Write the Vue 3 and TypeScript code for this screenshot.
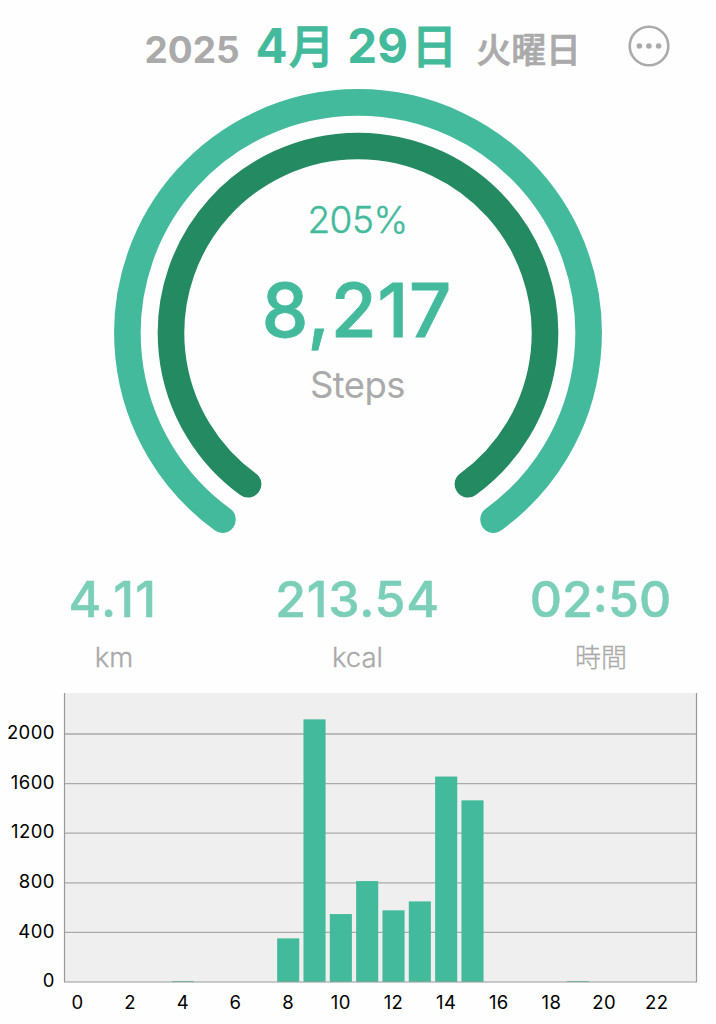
<script setup lang="ts">
interface Stat {
  value: string
  unit: string
  kind: string
}

const stats: Stat[] = [
  { value: '4.11', unit: 'km', kind: 'distance' },
  { value: '213.54', unit: 'kcal', kind: 'energy' },
  { value: '02:50', unit: '時間', kind: 'duration' },
]

const steps: Record<number, number> = {
  4: 7, 8: 352, 9: 2118, 10: 548, 11: 814, 12: 578, 13: 650, 14: 1657, 15: 1465, 19: 7,
}

const baseY = 289
const slot = 26.33
const perStep = 49.6 / 400

const bars = Object.entries(steps).map(([hour, count]) => ({
  hour,
  x: 66.5 + Number(hour) * slot,
  height: count * perStep,
}))

const levels = [0, 400, 800, 1200, 1600, 2000]
const hours = [0, 2, 4, 6, 8, 10, 12, 14, 16, 18, 20, 22]

function arc(r: number): string {
  const a = (36 * Math.PI) / 180
  const dx = r * Math.sin(a)
  const y = 333 + r * Math.cos(a) - 80
  return `M${358 - dx} ${y}A${r} ${r} 0 1 1 ${358 + dx} ${y}`
}
</script>

<template>
  <main class="screen">
    <header class="header">
      <span class="year">2025</span>
      <h1 class="date">4<span class="kanji month">月</span> 29<span class="kanji day">日</span></h1>
      <span class="weekday">火曜日</span>
      <button class="more" aria-label="menu">
        <svg width="44" height="44" viewBox="0 0 44 44">
          <circle cx="22" cy="22" r="19.3" fill="none" stroke="#aaa" stroke-width="2.6" />
          <circle v-for="x in [12.4, 21.9, 31.6]" :key="x" :cx="x" cy="22" r="2.8" fill="#aaa" />
        </svg>
      </button>
    </header>

    <svg class="gauge" width="716" height="480" viewBox="0 0 716 480">
      <path :d="arc(230.6)" class="ring outer" />
      <path :d="arc(187)" class="ring inner" />
      <text x="357.5" y="153" class="percent">205%</text>
      <text x="357" y="257" class="count">8,217</text>
      <text x="357.5" y="318" class="caption">Steps</text>
    </svg>

    <section class="stats">
      <div v-for="s in stats" :key="s.kind" class="stat" :class="s.kind">
        <div class="value">{{ s.value }}</div>
        <div class="unit">{{ s.unit }}</div>
      </div>
    </section>

    <svg class="chart" width="716" height="331" viewBox="0 0 716 331">
      <rect x="64" y="0" width="633" height="289" fill="#efefef" />
      <line
        v-for="l in levels.slice(1)" :key="l" x1="64" x2="697"
        :y1="baseY - l * perStep" :y2="baseY - l * perStep" class="grid"
      />
      <rect v-for="b in bars" :key="b.hour" :x="b.x" :y="baseY - b.height" width="22.1" :height="b.height" class="bar" />
      <path d="M64.5 0V289M696.5 0V289M64 289H697" class="axis" />
      <text v-for="l in levels" :key="'y' + l" x="54.8" :y="baseY - l * perStep + 5.2" class="tick level">{{ l }}</text>
      <text v-for="h in hours" :key="'x' + h" :x="77.5 + h * slot" y="315.6" class="tick hour">{{ h }}</text>
    </svg>
  </main>
</template>

<style>
body {
  margin: 0;
  background: #fefefe;
}
</style>

<style scoped>
.screen {
  width: 716px;
  height: 1024px;
  overflow: hidden;
  background: #fefefe;
  font-family: Inter, "Noto Sans CJK JP", sans-serif;
}
.header {
  display: flex;
  align-items: baseline;
  height: 80px;
  box-sizing: border-box;
  padding-left: 144.5px;
  color: #aaa;
  white-space: nowrap;
}
.year {
  width: 111px;
  font-size: 37px;
  font-weight: 680;
  line-height: 100px;
}
.date {
  width: 221px;
  margin: 0;
  font-size: 47.5px;
  font-weight: 680;
  line-height: 1;
  color: #44ba9c;
}
.kanji {
  font-size: 46px;
  font-weight: 500;
  line-height: 1;
  -webkit-text-stroke: 0.9px currentColor;
}
.month {
  margin-left: 1px;
  margin-right: 1.5px;
}
.day {
  margin-left: 3px;
}
.weekday {
  width: 150px;
  font-size: 34.8px;
  font-weight: 500;
  line-height: 1;
  -webkit-text-stroke: 0.7px currentColor;
}
.more {
  align-self: flex-start;
  margin: 24px 0 0;
  padding: 0;
  border: 0;
  background: none;
  line-height: 0;
}
.gauge,
.chart {
  display: block;
}
.ring {
  fill: none;
  stroke-width: 26.6;
  stroke-linecap: round;
}
.outer {
  stroke: #44ba9c;
}
.inner {
  stroke: #248a62;
}
.gauge text {
  text-anchor: middle;
  fill: #44ba9c;
}
.gauge .percent {
  font-size: 37px;
  font-weight: 300;
  letter-spacing: -0.5px;
  stroke: #44ba9c;
  stroke-width: 0.4px;
}
.gauge .count {
  font-size: 74px;
  font-weight: 500;
  letter-spacing: 0.9px;
  stroke: #44ba9c;
  stroke-width: 0.9px;
}
.gauge .caption {
  font-size: 36.5px;
  font-weight: 370;
  letter-spacing: -0.6px;
  fill: #aaa;
}
.stats {
  display: grid;
  grid-template-columns: 226px 263px 223px;
  height: 133px;
  text-align: center;
}
.value {
  padding-top: 9px;
  height: 60px;
  line-height: 60px;
  font-size: 50px;
  font-weight: 500;
  color: #7bcfb9;
  -webkit-text-stroke: 0.5px currentColor;
}
.distance .value {
  letter-spacing: 1.4px;
}
.energy .value {
  letter-spacing: 0.7px;
}
.duration .value {
  letter-spacing: 0;
}
.unit {
  height: 54px;
  line-height: 56px;
  font-size: 27.5px;
  font-weight: 300;
  color: #aaa;
  -webkit-text-stroke: 0.3px currentColor;
}
.distance .unit {
  padding-left: 2px;
}
.duration .unit {
  padding-left: 1px;
  font-size: 26px;
  line-height: 57px;
}
.grid {
  stroke: #aaa;
  stroke-width: 1.3;
}
.axis {
  fill: none;
  stroke: #999;
  stroke-width: 1.2;
}
.bar {
  fill: #44ba9c;
}
.tick {
  font-size: 18.5px;
  letter-spacing: 0.4px;
  fill: #000;
}
.level {
  text-anchor: end;
}
.hour {
  text-anchor: middle;
}
</style>
